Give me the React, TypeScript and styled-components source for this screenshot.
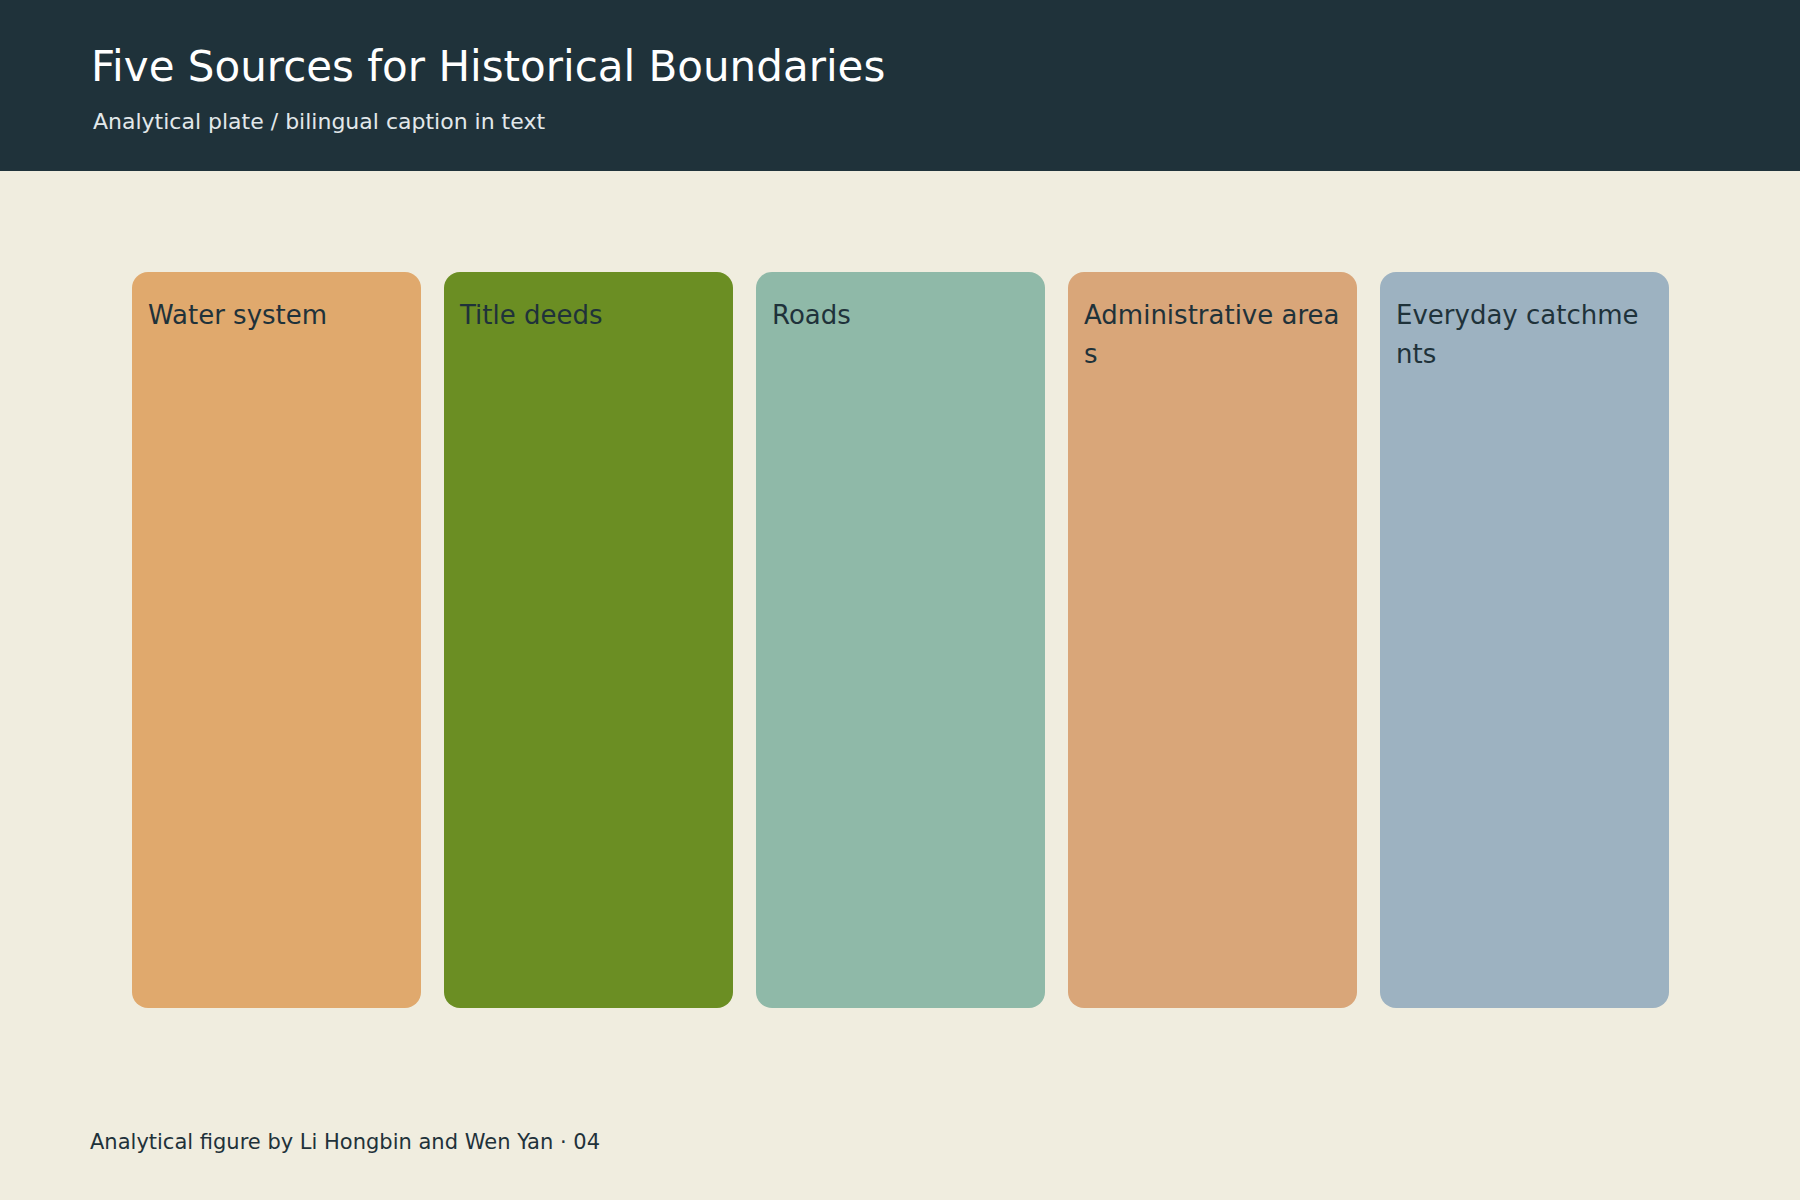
import React from "react";
import styled, { createGlobalStyle } from "styled-components";

const Global = createGlobalStyle`
  html, body { margin: 0; padding: 0; }
  body {
    width: 1800px;
    height: 1200px;
    background: #f0eddf;
    font-family: "DejaVu Sans", "Liberation Sans", sans-serif;
    overflow: hidden;
  }
`;

const Page = styled.div`
  width: 1800px;
  height: 1200px;
  display: flex;
  flex-direction: column;
`;

const Header = styled.header`
  height: 171px;
  box-sizing: border-box;
  background: #1f323a;
  padding: 42px 91px 0;
`;

const Title = styled.h1`
  margin: 0;
  font-size: 42px;
  font-weight: 400;
  color: #ffffff;
`;

const Subtitle = styled.p`
  margin: 18px 0 0 2px;
  font-size: 22px;
  color: #e2e8ea;
`;

const Row = styled.section`
  display: flex;
  gap: 23px;
  padding: 101px 0 0 132px;
`;

const Card = styled.div<{ $bg: string }>`
  width: 289px;
  height: 736px;
  box-sizing: border-box;
  border-radius: 16px;
  background: ${(p) => p.$bg};
  padding: 24px 16px;
  font-size: 26px;
  line-height: 39px;
  color: #1f323a;
  word-break: break-all;
`;

const Footer = styled.footer`
  margin-top: auto;
  padding: 0 0 46px 90px;
  font-size: 21px;
  color: #1f323a;
`;

const cards = [
  { label: "Water system", bg: "#e0a96d" },
  { label: "Title deeds", bg: "#6b8e23" },
  { label: "Roads", bg: "#8fb9a8" },
  { label: "Administrative areas", bg: "#d9a679" },
  { label: "Everyday catchments", bg: "#9db2c1" },
];

export default function App() {
  return (
    <Page>
      <Global />
      <Header>
        <Title>Five Sources for Historical Boundaries</Title>
        <Subtitle>Analytical plate / bilingual caption in text</Subtitle>
      </Header>
      <Row>
        {cards.map((c) => (
          <Card key={c.label} $bg={c.bg}>
            {c.label}
          </Card>
        ))}
      </Row>
      <Footer>Analytical figure by Li Hongbin and Wen Yan · 04</Footer>
    </Page>
  );
}
